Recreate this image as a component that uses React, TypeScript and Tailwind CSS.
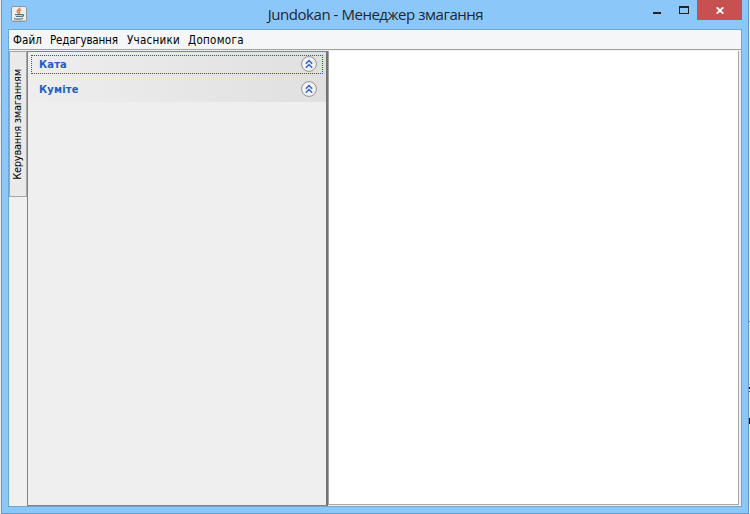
import React from 'react';

const tahoma = "font-['DejaVu_Sans_Condensed','DejaVu_Sans',sans-serif] [font-stretch:condensed]";

function JavaIcon() {
  return (
    <svg width="16" height="16" viewBox="0 0 16 16" fill="none">
      <rect x="0.5" y="0.5" width="15" height="15" rx="1.5" fill="#eceff1" stroke="#8b999f" />
      <path d="M1.5 14.5h13" stroke="#c0c8cc" />
      <path d="M8.800 1.500c.6 1.800-3 2.400-2.600 4 .2 1 1.200 1.200 1.300 2.200M10.300 3.700c-2.200.8-2.600 1.700-1.800 2.500.5.6.2 1.200-.3 1.700" stroke="#e5792d" strokeWidth="1.300" />
      <path d="M4 8.700h6.800M4.800 10.500h5.500M3 12.500c1.500.8 7 .8 9 0M10.800 8.700c2.600-.5 2.300 1.700-.3 1.900" stroke="#4e7188" strokeWidth="1.200" />
    </svg>
  );
}

function CollapseIcon() {
  return (
    <svg width="17" height="17" viewBox="0 0 17 17" fill="none" className="shrink-0">
      <circle cx="8" cy="8" r="7.400" fill="#f3f3f3" stroke="#929292" />
      <path d="M4.800 7.700L8 4.500l3.200 3.200M4.800 11.700L8 8.500l3.200 3.200" stroke="#2c5fce" strokeWidth="1.400" />
    </svg>
  );
}

function TitleBar() {
  return (
    <header className="flex h-[29px] shrink-0">
      <div className="w-[98px] pt-[6px] pl-[9px]"><JavaIcon /></div>
      <h1 className="flex-1 pt-[4px] text-center font-['Open_Sans','Noto_Sans',sans-serif] text-[15px] leading-[20px] tracking-[-0.46px] whitespace-nowrap text-[#1e2830]">Jundokan - Менеджер змагання</h1>
      <div className="flex w-[97px] shrink-0">
        <button aria-label="Minimize" className="flex h-5 w-[18px] items-start pt-[12px] pl-[2px]"><span className="h-[2px] w-2 bg-[#222]" /></button>
        <button aria-label="Maximize" className="flex h-5 w-[28px] items-start pt-[6px] pl-[10px]"><span className="h-2 w-[10px] border border-t-2 border-[#222]" /></button>
        <button aria-label="Close" className="flex h-5 w-[45px] items-center justify-center bg-[#c75050]">
          <svg width="8" height="7" viewBox="0 0 8 7" fill="none"><path d="M.7.4l6.600 6.200M7.300.4L.7 6.600" stroke="#fff" strokeWidth="1.900" /></svg>
        </button>
      </div>
    </header>
  );
}

const menus = [
  { label: 'Файл', box: 'w-[37px] tracking-[0.1px]' },
  { label: 'Редагування', box: 'w-[77px] tracking-[-0.2px]' },
  { label: 'Учасники', box: 'w-[61px] tracking-[0.25px]' },
  { label: 'Допомога', box: 'w-[70px] tracking-[0.3px]' },
];

function MenuBar() {
  return (
    <nav className={`flex h-5 shrink-0 border-b border-[#a0a0a0] bg-[#f5f6f7] pl-1 text-[11.500px] leading-[20px] text-black ${tahoma}`}>
      {menus.map((m) => <span key={m.label} className={`shrink-0 whitespace-nowrap ${m.box}`}>{m.label}</span>)}
    </nav>
  );
}

function Section({ label, focused = false }: { label: string; focused?: boolean }) {
  return (
    <section className="h-[25px] bg-linear-to-r from-[#eeeeee] to-[#e0e0e0] pt-[3px] pr-[3px] pl-[3px]">
      <div className={`flex h-[19px] items-center justify-between border border-dotted pr-[4px] pl-[7px] ${focused ? 'border-[#2859b8]' : 'border-transparent'}`}>
        <span className={`text-[11px] leading-[14px] font-bold tracking-[0.2px] text-[#215dc6] ${tahoma}`}>{label}</span>
        <CollapseIcon />
      </div>
    </section>
  );
}

export default function App() {
  return (
    <div className="relative h-[514px] w-[750px] overflow-hidden bg-[#eef1f4] pl-px">
      <div className="flex h-[514px] w-[748px] flex-col border border-t-0 border-[#6098c8] bg-[#8cc7fa]">
        <TitleBar />
        <main className="ml-[6px] flex h-[478px] w-[734px] flex-col border border-[#70a5d3] bg-[#f0f0f0]">
          <MenuBar />
          <div className="flex min-h-0 flex-1 bg-[#f0f0f0] pt-px">
            <div className="w-[18px] shrink-0">
              <div className="flex h-[146px] items-center justify-center border border-[#a5a5a5] bg-[#eaeaea]">
                <span className={`rotate-180 text-[11px] leading-[14px] tracking-[-0.25px] whitespace-nowrap text-black [writing-mode:vertical-rl] ${tahoma}`}>Керування змаганням</span>
              </div>
            </div>
            <aside className="w-[301px] shrink-0 border border-r-2 border-[#80838b] border-r-[#70737a] bg-[#efefef]">
              <Section label="Ката" focused />
              <Section label="Куміте" />
            </aside>
            <div className="mr-[2px] mb-px flex-1 border border-t-0 border-[#a5a5a5] bg-white" />
          </div>
        </main>
      </div>
      <span className="absolute top-[321px] right-0 h-px w-px bg-[#777]" />
      <span className="absolute top-[387px] right-0 h-[2px] w-px bg-black" />
      <span className="absolute top-[391px] right-0 h-px w-px bg-[#555]" />
      <span className="absolute top-[418px] right-0 h-[6px] w-px bg-black" />
    </div>
  );
}
